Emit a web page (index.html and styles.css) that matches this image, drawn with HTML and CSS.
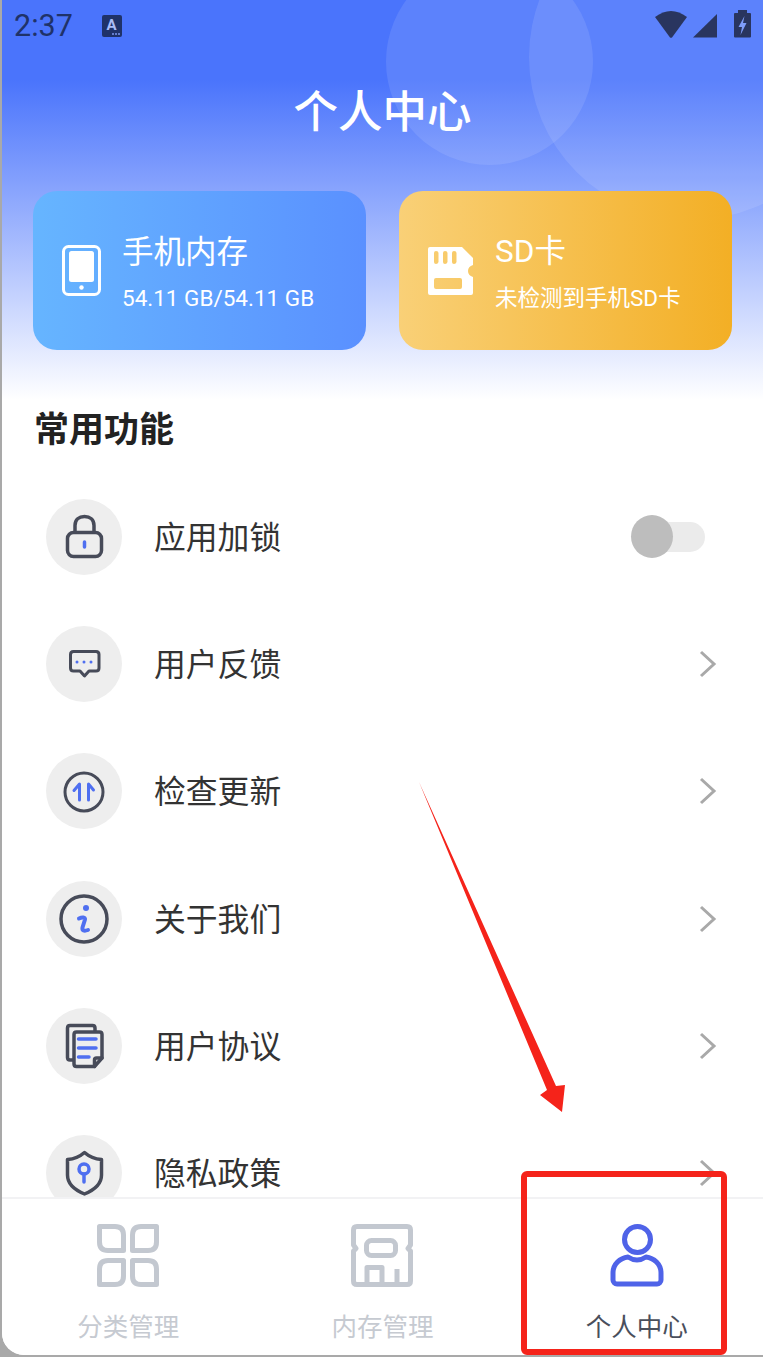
FILE: index.html
```html
<!DOCTYPE html>
<html>
	<head>
		<meta charset="UTF-8">
		<title>个人中心</title>
		<link rel="stylesheet" href="styles.css">
	</head>
	<body>
		<div class="app">
			<div class="main">
				<div class="bubble bubble1"></div>
				<div class="bubble bubble2"></div>

				<div class="status">
					<span class="time">2:37</span>
					<svg class="status-a" width="20" height="22" viewBox="0 0 20 22">
						<rect width="20" height="22" rx="2" fill="#1f3269"/>
						<text x="9.500" y="15" class="status-a-text">A</text>
						<circle cx="11" cy="19" r="1" fill="#7d97f0"/><circle cx="14" cy="19" r="1" fill="#7d97f0"/><circle cx="17" cy="19" r="1" fill="#7d97f0"/>
					</svg>
					<svg class="status-icons" width="96" height="28" viewBox="0 0 96 28">
						<path d="M0 7Q16-5 32 7L17 27.500Q16 28 15 27.500Z" fill="#29355f"/>
						<path d="M38 27.500 62 4V27.500Z" fill="#29355f"/>
						<path d="M83 0H92V3H95A1 1 0 0 1 96 4V26.500A1 1 0 0 1 95 27.500H80A1 1 0 0 1 79 26.500V4A1 1 0 0 1 80 3H83Z" fill="#29355f"/>
						<path d="M89.500 6 83.500 17H87L85.500 25 91.500 13H88Z" fill="#7f9dfb"/>
					</svg>
				</div>

				<h1 class="title">个人中心</h1>

				<div class="cards">
					<div class="card card-phone">
						<svg class="card-icon" width="39" height="51" viewBox="0 0 39 51">
							<rect x="1.500" y="1.500" width="36" height="48" rx="5" fill="none" stroke="#fff" stroke-width="3"/>
							<rect x="7" y="6" width="25" height="31" rx="2.500" fill="#fff"/>
							<circle cx="19.500" cy="42.500" r="2.200" fill="#fff"/>
						</svg>
						<div class="card-text">
							<div class="card-name">手机内存</div>
							<div class="card-info">54.11 GB/54.11 GB</div>
						</div>
					</div>
					<div class="card card-sd">
						<svg class="card-icon sd-icon" width="45" height="48" viewBox="0 0 45 48">
							<path fill="#fff" fill-rule="evenodd" d="M2 0H34L45 11V18Q40 19.500 40 24T45 30V46A2 2 0 0 1 43 48H2A2 2 0 0 1 0 46V2A2 2 0 0 1 2 0ZM8 4Q6 4 6 6V15Q6 17 8 17T10.500 15V6Q10.500 4 8 4ZM17 4Q15 4 15 6V15Q15 17 17 17T19.500 15V6Q19.500 4 17 4ZM26 4Q24 4 24 6V15Q24 17 26 17T28.500 15V6Q28.500 4 26 4ZM8 31Q6 31 6 33V40Q6 42 8 42H32Q34 42 34 40V33Q34 31 32 31Z"/>
						</svg>
						<div class="card-text">
							<div class="card-name">SD卡</div>
							<div class="card-info">未检测到手机SD卡</div>
						</div>
					</div>
				</div>

				<h2 class="section">常用功能</h2>

				<ul class="list">
					<li class="row">
						<span class="row-icon">
							<svg width="76" height="76" viewBox="0 0 76 76">
								<g class="ink">
									<rect x="21.500" y="33.500" width="34" height="24" rx="6"/>
									<path d="M29 33V26.500C29 20.500 33 17.500 38.500 17.500S48 20.500 48 26.500V33"/>
								</g>
								<path class="mark" d="M38.500 43V48"/>
							</svg>
						</span>
						<span class="row-name">应用加锁</span>
						<span class="switch"><span class="knob"></span></span>
					</li>
					<li class="row">
						<span class="row-icon">
							<svg width="76" height="76" viewBox="0 0 76 76">
								<path class="ink thin" d="M27.500 25.500H50Q53 25.500 53 28.500V42Q53 45 50 45H43L38.500 50 34 45H27.500Q24.500 45 24.500 42V28.500Q24.500 25.500 27.500 25.500Z"/>
								<circle cx="31" cy="36" r="1.500" class="dot"/><circle cx="38" cy="36" r="1.500" class="dot"/><circle cx="45" cy="36" r="1.500" class="dot"/>
							</svg>
						</span>
						<span class="row-name">用户反馈</span>
						<svg class="arrow" width="18" height="28" viewBox="0 0 18 28"><path d="M2 2 15 14 2 26"/></svg>
					</li>
					<li class="row">
						<span class="row-icon">
							<svg width="76" height="76" viewBox="0 0 76 76">
								<circle cx="38" cy="39" r="19" class="ink thin"/>
								<path class="mark thin" d="M33.500 47V31L28 37.500M42.500 47V31L47.500 37"/>
							</svg>
						</span>
						<span class="row-name">检查更新</span>
						<svg class="arrow" width="18" height="28" viewBox="0 0 18 28"><path d="M2 2 15 14 2 26"/></svg>
					</li>
					<li class="row">
						<span class="row-icon">
							<svg width="76" height="76" viewBox="0 0 76 76">
								<circle cx="38" cy="38" r="23" class="ink"/>
								<circle cx="40" cy="27" r="3" class="dot"/>
								<path class="mark wide" d="M33 37.500C36 36 39.500 36 39 38.500L36.500 46.500C36 49.500 38 50.500 42 49"/>
							</svg>
						</span>
						<span class="row-name">关于我们</span>
						<svg class="arrow" width="18" height="28" viewBox="0 0 18 28"><path d="M2 2 15 14 2 26"/></svg>
					</li>
					<li class="row">
						<span class="row-icon">
							<svg width="76" height="76" viewBox="0 0 76 76">
								<g class="ink">
									<path d="M27 52H24Q21.500 52 21.500 49.500V20Q21.500 17.500 24 17.500H46.500Q49 17.500 49 20V23"/>
									<path d="M30.500 24H53.500Q56 24 56 26.500V50L48.500 58.500H30.500Q28 58.500 28 56V26.500Q28 24 30.500 24Z"/>
									<path d="M56 50H50.500Q48.500 50 48.500 52V58.500"/>
								</g>
								<path class="mark" d="M32.500 31H50M32.500 40H50M32.500 49H43"/>
							</svg>
						</span>
						<span class="row-name">用户协议</span>
						<svg class="arrow" width="18" height="28" viewBox="0 0 18 28"><path d="M2 2 15 14 2 26"/></svg>
					</li>
					<li class="row">
						<span class="row-icon">
							<svg width="76" height="76" viewBox="0 0 76 76">
								<path class="ink" d="M38.500 17.500C43 21.500 49 24 55.500 24.500V40C55.500 49 47 55.500 38.500 59 30 55.500 21.500 49 21.500 40V24.500C28 24 34 21.500 38.500 17.500Z"/>
								<circle cx="38" cy="34" r="5" class="mark"/>
								<path class="mark" d="M38 39V47"/>
							</svg>
						</span>
						<span class="row-name">隐私政策</span>
						<svg class="arrow" width="18" height="28" viewBox="0 0 18 28"><path d="M2 2 15 14 2 26"/></svg>
					</li>
				</ul>
			</div>

			<div class="tabbar">
				<div class="tab">
					<svg class="tab-icon off" width="62" height="63" viewBox="0 0 62 63">
						<path d="M2.500 2.500H18Q26.500 2.500 26.500 11V26.500H11Q2.500 26.500 2.500 18Z"/>
						<path d="M59.500 2.500H44Q35.500 2.500 35.500 11V26.500H51Q59.500 26.500 59.500 18Z"/>
						<path d="M2.500 60.500H18Q26.500 60.500 26.500 52V36.500H11Q2.500 36.500 2.500 45Z"/>
						<path d="M59.500 60.500H44Q35.500 60.500 35.500 52V36.500H51Q59.500 36.500 59.500 45Z"/>
					</svg>
					<span class="tab-name">分类管理</span>
				</div>
				<div class="tab">
					<svg class="tab-icon off" width="62" height="63" viewBox="0 0 62 63">
						<path d="M16 60.500H6Q2.500 60.500 2.500 57V27L5 24.500 2.500 21V6Q2.500 2.500 6 2.500H56Q59.500 2.500 59.500 6V21L57 24.500 59.500 27V57Q59.500 60.500 56 60.500H16V43.500H31V60M46 60V45"/>
						<rect x="15.500" y="16.500" width="29" height="15" rx="5"/>
					</svg>
					<span class="tab-name">内存管理</span>
				</div>
				<div class="tab tab-on">
					<svg class="tab-icon on" width="54" height="63" viewBox="0 0 54 63">
						<circle cx="27.500" cy="15.500" r="13"/>
						<path d="M7 60H47A4 4 0 0 0 51 56V49C51 40 44 34 36 33 33 35 30 36 27 36S21 35 18 33C10 34 3 40 3 49V56A4 4 0 0 0 7 60Z"/>
					</svg>
					<span class="tab-name">个人中心</span>
				</div>
			</div>
		</div>

		<!-- 红色标注:箭头和方框 -->
		<svg class="note-arrow" width="763" height="1357" viewBox="0 0 763 1357">
			<path d="M419 782 556 1086 565 1085 562 1112 540 1095 547 1090Z" fill="#f5231a"/>
		</svg>
		<div class="note-box"></div>
	</body>
</html>
```

FILE: styles.css
```css
body{
	margin: 0;
	width: 763px;
	height: 1357px;
	overflow: hidden;
	position: relative;
	background-color: #a9a9a9;
	font-family: "Noto Sans CJK SC", "Noto Sans", sans-serif;
}
h1,h2,ul{
	margin: 0;
	padding: 0;
	list-style: none;
}
.app{
	margin-left: 2px;
	width: 761px;
	height: 1355px;
	display: flex;
	flex-direction: column;
	background-color: #fff;
	border-radius: 0 0 0 22px;
	overflow: hidden;
}
.main{
	position: relative;
	flex: 1;
	min-height: 0;
	overflow: hidden;
	background: linear-gradient(180deg, #4a74fc 0, #4a74fc 80px, #fff 400px);
}

/* 顶部两个半透明的圆 */
.bubble{
	position: absolute;
	border-radius: 50%;
	background-color: rgba(255,255,255,.1);
}
.bubble1{
	left: 384px;
	top: -42px;
	width: 207px;
	height: 207px;
}
.bubble2{
	left: 527px;
	top: -106px;
	width: 326px;
	height: 326px;
}

.status{
	position: relative;
	height: 50px;
	display: flex;
	align-items: flex-start;
	padding-left: 12px;
}
.time{
	margin-top: 9px;
	font: 30.500px/34px Roboto, sans-serif;
	color: #1f3269;
}
.status-a{
	margin: 15px 0 0 29px;
}
.status-a-text{
	font: bold 15px Roboto, sans-serif;
	fill: #a9bcf7;
	text-anchor: middle;
}
.status-icons{
	margin: 10px 0 0 auto;
	margin-right: 12px;
}

.title{
	position: relative;
	margin-top: 36px;
	height: 46px;
	font-size: 44.500px;
	line-height: 45px;
	font-weight: 500;
	text-align: center;
	color: #fff;
}

.cards{
	position: relative;
	margin-top: 59px;
	padding-left: 31px;
	display: flex;
	gap: 33px;
}
.card{
	width: 333px;
	height: 159px;
	border-radius: 24px;
	display: flex;
	align-items: center;
	color: #fff;
}
.card-phone{
	background: linear-gradient(90deg, #66b5ff, #5a90ff);
}
.card-sd{
	background: linear-gradient(90deg, #f9d077, #f3af25);
}
.card-icon{
	flex: none;
	margin-left: 29px;
}
.card-text{
	margin-left: 21px;
}
.sd-icon + .card-text{
	margin-left: 22px;
}
.card-name{
	font-size: 31.500px;
	line-height: 36px;
}
.card-info{
	margin-top: 18px;
	font: 22.500px/26px Roboto, "Noto Sans CJK SC", sans-serif;
}
.card-sd .card-name{
	font-family: Roboto, "Noto Sans CJK SC", sans-serif;
	line-height: 42px;
}
.card-sd .card-info{
	margin-top: 12px;
}

.section{
	position: relative;
	margin: 58px 0 0 32px;
	font-size: 35px;
	line-height: 38px;
	font-weight: 700;
	color: #222;
}
.list{
	position: relative;
	margin-top: 27px;
}
.row{
	height: 127.300px;
	display: flex;
	align-items: center;
	padding-left: 44px;
	padding-right: 46px;
}
.row-icon{
	flex: none;
	width: 76px;
	height: 76px;
	border-radius: 50%;
	background-color: #eeeeee;
}
.row-icon svg{
	display: block;
}
.row-name{
	flex: 1;
	margin-left: 32px;
	margin-bottom: 4px;
	font-size: 31.800px;
	line-height: 40px;
	color: #333;
}
.ink{
	fill: none;
	stroke: #474b59;
	stroke-width: 3.500;
	stroke-linejoin: round;
	stroke-linecap: round;
}
.mark{
	fill: none;
	stroke: #4f6ff0;
	stroke-width: 3.500;
	stroke-linecap: round;
	stroke-linejoin: round;
}
.thin{
	stroke-width: 3;
}
.wide{
	stroke-width: 4;
}
.dot{
	fill: #4f6ff0;
}
.arrow{
	flex: none;
}
.arrow path{
	fill: none;
	stroke: #a9a9a9;
	stroke-width: 3;
}
.switch{
	position: relative;
	width: 65px;
	height: 30px;
	margin-right: 12px;
	border-radius: 15px;
	background-color: #ebebeb;
}
.knob{
	position: absolute;
	left: -9px;
	top: -7px;
	width: 42px;
	height: 43px;
	border-radius: 50%;
	background-color: #bdbdbd;
}

.tabbar{
	flex: none;
	height: 156px;
	margin: 0 -1px;
	display: flex;
	border-top: 2px solid #f2f2f4;
	background-color: #fff;
}
.tab{
	flex: 1;
	display: flex;
	flex-direction: column;
	align-items: center;
	padding-top: 25px;
}
.tab-name{
	margin-top: 20px;
	font-size: 25.500px;
	line-height: 36px;
	color: #c6cad1;
}
.tab-on .tab-name{
	color: #4a4f5c;
}
.tab-icon{
	fill: none;
	stroke-width: 5;
	stroke-linejoin: round;
}
.off{
	stroke: #c3c8d0;
}
.on{
	stroke: #4f63e8;
}

.note-arrow{
	position: absolute;
	left: 0;
	top: 0;
}
.note-box{
	position: absolute;
	left: 521px;
	top: 1171px;
	width: 194px;
	height: 172px;
	border: 6px solid #f5231a;
	border-radius: 6px;
}
```
